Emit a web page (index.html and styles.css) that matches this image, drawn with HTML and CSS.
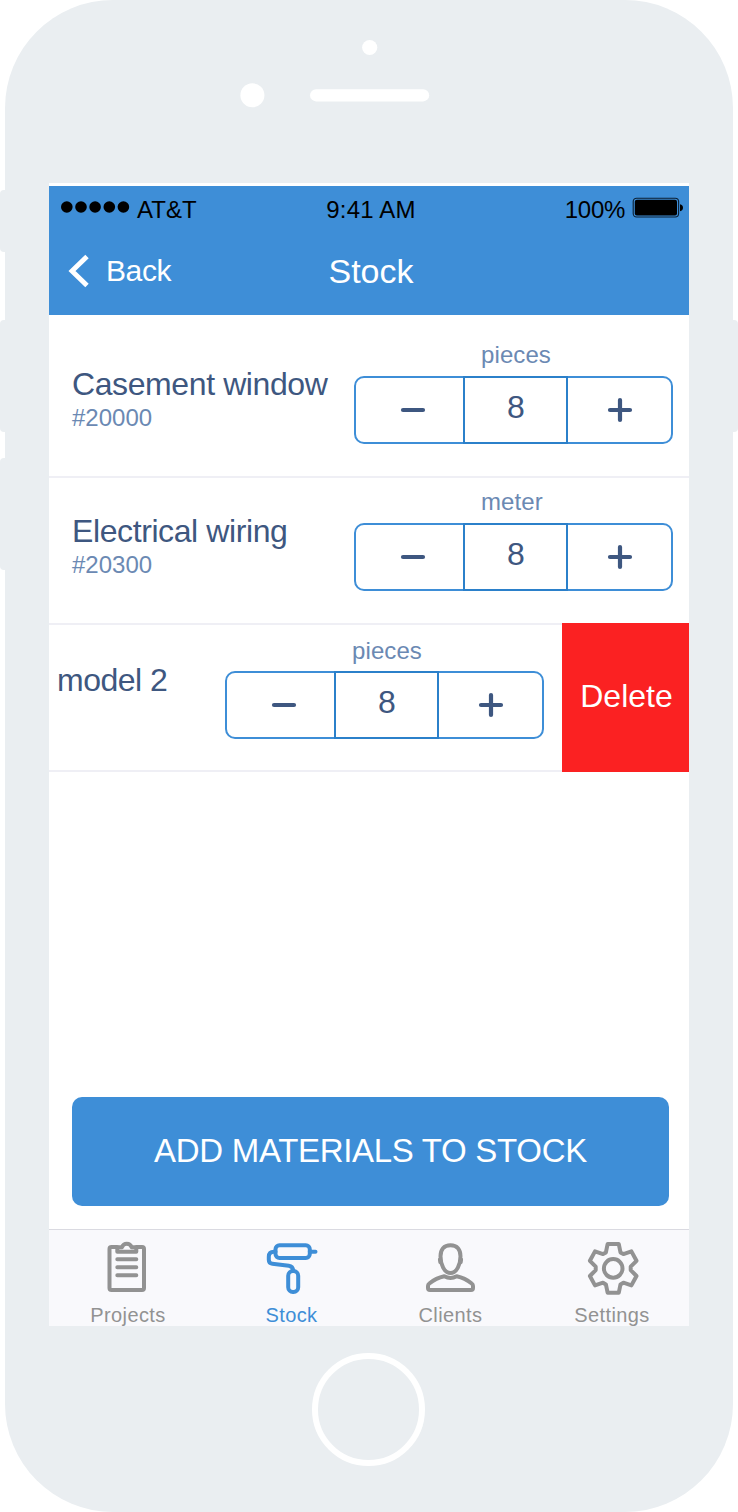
FILE: index.html
```html
<!DOCTYPE html>
<html lang="en">
<head>
<meta charset="utf-8">
<title>Stock</title>
<link rel="stylesheet" href="styles.css">
</head>
<body>
<div class="device">
  <div class="side side-left">
    <span class="key key-mute"></span>
    <span class="key"></span>
    <span class="key key-down"></span>
  </div>
  <div class="phone">
    <svg class="hardware" viewBox="0 0 728 183" fill="#fff">
      <circle cx="364.7" cy="47.5" r="7.6"/>
      <circle cx="247.4" cy="95.3" r="12"/>
      <rect x="305" y="89.2" width="119.2" height="12.2" rx="6.1"/>
    </svg>
    <div class="screen">
      <header class="header">
        <div class="status">
          <div class="carrier">
            <svg width="69" height="14" viewBox="0 0 69 14"><circle cx="5.8" cy="7" r="5.8"/><circle cx="20" cy="7" r="5.8"/><circle cx="34.1" cy="7" r="5.8"/><circle cx="48.3" cy="7" r="5.8"/><circle cx="62.4" cy="7" r="5.8"/></svg>
            <span>AT&amp;T</span>
          </div>
          <div class="time">9:41 AM</div>
          <div class="power">
            <span>100%</span>
            <svg width="52" height="22" viewBox="0 0 52 22"><rect x="1.2" y="1.2" width="45.4" height="18.8" rx="3.4" fill="none" stroke="#0b1f33" stroke-width="1.1"/><rect x="2.8" y="2.8" width="42.2" height="15.6" rx="2"/><path d="M48 7.300c2 .5 3 1.800 3 3.500s-1 3-3 3.500z"/></svg>
          </div>
        </div>
        <nav class="nav">
          <div class="back">
            <svg width="22" height="34" viewBox="0 0 22 34"><path d="M19 2.500 4 17l15 14.500" fill="none" stroke="#fff" stroke-width="4.900"/></svg>
            <span>Back</span>
          </div>
          <h1 class="title">Stock</h1>
        </nav>
      </header>
      <main class="list">
        <section class="row row-first">
          <div class="info"><p class="name">Casement window</p><p class="code">#20000</p></div>
          <div class="quantity">
            <p class="unit">pieces</p>
            <div class="stepper">
              <div class="step"><svg width="26" height="26" viewBox="0 0 26 26"><path d="M3 13h20"/></svg></div>
              <div class="value">8</div>
              <div class="step step-plus"><svg width="26" height="26" viewBox="0 0 26 26"><path d="M3 13h20M13 3v20"/></svg></div>
            </div>
          </div>
        </section>
        <section class="row">
          <div class="info"><p class="name">Electrical wiring</p><p class="code">#20300</p></div>
          <div class="quantity">
            <p class="unit">meter</p>
            <div class="stepper">
              <div class="step"><svg width="26" height="26" viewBox="0 0 26 26"><path d="M3 13h20"/></svg></div>
              <div class="value">8</div>
              <div class="step step-plus"><svg width="26" height="26" viewBox="0 0 26 26"><path d="M3 13h20M13 3v20"/></svg></div>
            </div>
          </div>
        </section>
        <section class="row row-swiped">
          <div class="info"><p class="name">model 2</p><p class="code"></p></div>
          <div class="quantity">
            <p class="unit">pieces</p>
            <div class="stepper">
              <div class="step"><svg width="26" height="26" viewBox="0 0 26 26"><path d="M3 13h20"/></svg></div>
              <div class="value">8</div>
              <div class="step step-plus"><svg width="26" height="26" viewBox="0 0 26 26"><path d="M3 13h20M13 3v20"/></svg></div>
            </div>
          </div>
          <div class="delete">Delete</div>
        </section>
      </main>
      <div class="add">ADD MATERIALS TO STOCK</div>
      <footer class="tabs">
        <div class="tab">
          <svg class="icon" viewBox="0 0 60 60">
            <path d="M19.300 9H13.500q-2 0-2 2V50q0 2 2 2H44q2 0 2-2V11q0-2-2-2H38.300"/>
            <path d="M19.300 13.800V11.200q0-2 2-2h2.600c1.800-4.600 8-4.600 9.800 0h2.600q2 0 2 2V13.800zM19.300 21.300h19M19.300 29.300h19M19.300 37.300h19"/>
          </svg>
          <span>Projects</span>
        </div>
        <div class="tab tab-active">
          <svg class="icon" viewBox="0 0 60 60">
            <rect x="13.500" y="7.200" width="34.300" height="12.800" rx="4"/>
            <path d="M47.800 13.700H53.500M13.500 13.700H12c-3.500 0-5.200 2-5.200 5v3c0 2.500 1.300 3.700 3.500 4l16.500 2c3 .4 4.200 1.900 4.400 5"/>
            <rect x="26.200" y="33" width="10" height="21" rx="4.700"/>
          </svg>
          <span>Stock</span>
        </div>
        <div class="tab">
          <svg class="icon" viewBox="0 0 60 60">
            <path d="M29.500 7.300c-6.700 0-10 4.500-10 11 0 8 3.700 16.700 10 16.700s10-8.700 10-16.700c0-6.500-3.300-11-10-11z"/>
            <path d="M18.900 21.500l.4 2.600M40.100 21.500l-.4 2.600"/>
            <path d="M23.300 38.300C17.500 39.500 12 42.500 8.300 45.500q-1.300 1-1.300 2.500V50q0 2 2 2H50q2 0 2-2V48q0-1.500-1.300-2.500C47 42.500 41.500 39.500 35.700 38.300q-6.200 3.400-12.400 0z"/>
          </svg>
          <span>Clients</span>
        </div>
        <div class="tab tab-last">
          <svg class="icon" viewBox="0 0 60 60">
            <g transform="translate(31.200 30.400)">
              <circle r="9.300"/>
              <path d="M-7.300-16-5.600-24.300H5.600L7.300-16 10.200-14.300 18.200-17 23.300-7.600 17.500-1.700V1.700L23.300 7.600 18.200 17 10.200 14.300 7.300 16 5.600 24.300H-5.600L-7.300 16-10.200 14.300-18.200 17-23.300 7.600-17.500 1.700V-1.700L-23.300-7.600-18.200-17-10.200-14.300z"/>
            </g>
          </svg>
          <span>Settings</span>
        </div>
      </footer>
    </div>
    <div class="home"></div>
  </div>
  <div class="side side-right"><span class="key"></span></div>
</div>
</body>
</html>
```

FILE: styles.css
```css
* { box-sizing: border-box; }
body { margin: 0; background: #fff; font-family: "Liberation Sans", Arial, sans-serif; }
p, h1 { margin: 0; font-weight: 400; }
svg { display: block; flex: none; }

.device { display: flex; width: 738px; height: 1512px; }
.side { width: 5px; }
.side-left { padding-top: 190px; }
.side-right { padding-top: 320px; }
.key { display: block; height: 112px; background: #eaeef1; border-radius: 4px 0 0 4px; }
.side-right .key { border-radius: 0 4px 4px 0; }
.key-mute { height: 62px; margin-bottom: 68px; }
.key-down { margin-top: 26px; }

.phone { width: 728px; height: 1512px; border-radius: 108px; background: #eaeef1; }
.hardware { width: 728px; height: 183px; }
.screen { display: flex; flex-direction: column; width: 640px; height: 1143px; margin-left: 44px; padding-top: 3px; background: #fff; overflow: hidden; }
.home { width: 113px; height: 113px; margin: 27px 0 0 307px; border: 6px solid #fff; border-radius: 50%; }

.header { height: 129px; background: #3e8ed7; }
.status { display: grid; grid-template-columns: 1fr auto 1fr; height: 50px; padding: 10px 5px 0 12px; font-size: 24px; line-height: 28px; color: #000; }
.carrier { display: flex; gap: 7px; }
.carrier svg { margin-top: 4px; }
.time { padding-right: 3px; letter-spacing: 0.2px; }
.power { display: flex; justify-content: flex-end; gap: 7px; letter-spacing: -0.3px; }
.power svg { margin-top: 1px; }
.nav { display: grid; grid-template-columns: 1fr auto 1fr; padding: 16px 16px 0; color: #fff; }
.back { display: flex; gap: 16px; padding: 2px 0 0 3px; font-size: 30px; line-height: 34px; letter-spacing: -0.4px; }
.title { padding-left: 4px; font-size: 34px; line-height: 38px; }

.row { display: flex; align-items: flex-end; justify-content: space-between; height: 147px; padding: 0 16px 32px 23px; border-bottom: 2px solid #efeff5; }
.row-first { height: 163px; }
.info { padding-bottom: 12px; }
.name { font-size: 32px; line-height: 32px; letter-spacing: -0.4px; color: #3e5780; white-space: nowrap; }
.code { height: 28px; margin-top: 4px; font-size: 24px; line-height: 28px; color: #6b89b3; }
.quantity { width: 319px; }
.unit { margin: 0 0 7px 127px; font-size: 24px; line-height: 28px; letter-spacing: 0.1px; color: #6b89b3; }
.stepper { display: grid; grid-template-columns: 107px 105px 1fr; height: 68px; border: 2px solid #3e8ed7; border-radius: 10px; }
.step { display: grid; place-items: center; padding-left: 6px; }
.step-plus { padding-left: 1px; }
.step svg { fill: none; stroke: #3e5780; stroke-width: 4.2; stroke-linecap: round; }
.value { margin: -2px 0; padding-left: 1px; border: 2px solid #2b80ca; font-size: 32px; line-height: 58px; text-align: center; color: #3e5780; }
.row-swiped { padding: 0 0 31px 8px; }
.row-swiped .info { width: 168px; padding-bottom: 11px; }
.row-swiped .name { letter-spacing: -0.5px; }
.row-swiped .unit { margin-bottom: 6px; }
.delete { align-self: flex-start; width: 127px; height: 149px; margin: -2px 0 -33px 18px; padding-left: 2px; background: #fb2122; color: #fff; font-size: 32px; line-height: 146px; text-align: center; }

.add { height: 109px; margin: auto 20px 23px 23px; border-radius: 10px; background: #3e8ed7; color: #fff; font-size: 33px; line-height: 108px; letter-spacing: -0.3px; text-align: center; }

.tabs { display: grid; grid-template-columns: 158px 169px 149px 164px; height: 97px; border-top: 1px solid #dadae1; background: #f9f9fc; overflow: hidden; }
.tab { display: flex; flex-direction: column; align-items: center; padding-top: 8px; color: #929292; font-size: 20px; line-height: 24px; letter-spacing: 0.4px; }
.tab-active { color: #3e8ed7; }
.tab-last { padding-left: 10px; }
.icon { width: 60px; height: 60px; margin-bottom: 5px; fill: none; stroke: currentColor; stroke-width: 4; stroke-linecap: round; stroke-linejoin: round; }
```
